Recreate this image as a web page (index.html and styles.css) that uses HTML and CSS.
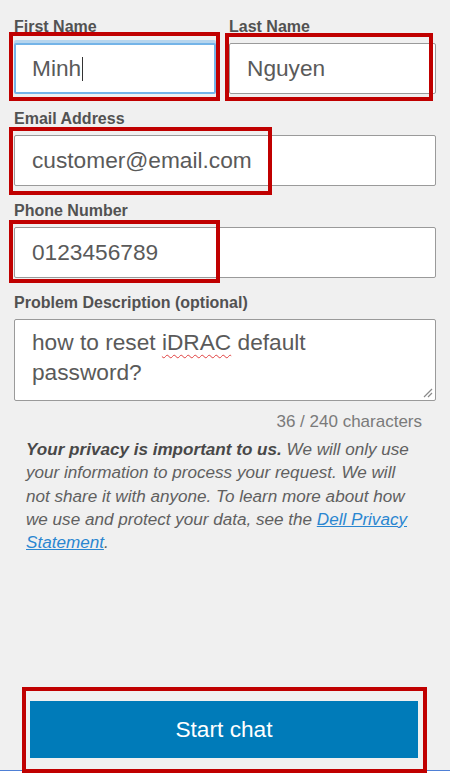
FILE: index.html
```html
<!DOCTYPE html>
<html lang="en">
<head>
<meta charset="utf-8">
<title>Start chat</title>
<link rel="stylesheet" href="styles.css">
</head>
<body>
<div class="page">
  <div class="row">
    <div class="field">
      <label class="label">First Name</label>
      <div class="input focus">Minh<span class="caret"></span></div>
    </div>
    <div class="field">
      <label class="label">Last Name</label>
      <div class="input">Nguyen</div>
    </div>
  </div>
  <div class="field">
    <label class="label">Email Address</label>
    <div class="input">customer@email.com</div>
  </div>
  <div class="field">
    <label class="label">Phone Number</label>
    <div class="input">0123456789</div>
  </div>
  <div class="field last">
    <label class="label">Problem Description (optional)</label>
    <div class="textarea">how to reset <span class="spell">iDRAC</span> default password?<svg class="grip" width="11" height="11" viewBox="0 0 11 11"><path d="M10 2 L2 10 M10 6 L6 10" stroke="#8a8a8a" stroke-width="1.2" fill="none"/></svg></div>
  </div>
  <div class="counter">36 / 240 characters</div>
  <p class="privacy"><b>Your privacy is important to us.</b> We will only use your information to process your request. We will not share it with anyone. To learn more about how we use and protect your data, see the <a href="#" class="link">Dell Privacy Statement</a>.</p>
  <div class="footer">
    <button class="btn" type="button">Start chat</button>
  </div>
  <div class="strip"></div>

  <div class="mark m1"></div>
  <div class="mark m2"></div>
  <div class="mark m3"></div>
  <div class="mark m4"></div>
  <div class="mark m5"></div>
</div>
</body>
</html>
```
FILE: styles.css
```css
html, body {
  margin: 0;
  padding: 0;
  background: #f0f0f0;
}
body {
  font-family: "Liberation Sans", Arial, sans-serif;
}
.page {
  position: relative;
  height: 780px;
  box-sizing: border-box;
  padding: 18px 14px 0 14px;
  display: flex;
  flex-direction: column;
  overflow: hidden;
}
.row {
  display: grid;
  grid-template-columns: 202px 1fr;
  column-gap: 13px;
}
.field {
  margin-bottom: 16px;
  display: flex;
  flex-direction: column;
}
.field.last {
  margin-bottom: 0;
}
.label {
  display: block;
  font-size: 16px;
  line-height: 18px;
  font-weight: bold;
  color: #525252;
  margin-bottom: 7px;
}
.input {
  box-sizing: border-box;
  height: 51px;
  background: #fff;
  border: 1px solid #9a9a9a;
  border-radius: 2px;
  padding: 0 17px;
  display: flex;
  align-items: center;
  font-size: 22.7px;
  color: #5a5a5a;
  white-space: nowrap;
  overflow: hidden;
}
.input.focus {
  border: 2px solid #74b4e8;
  padding-left: 16px;
  box-shadow: 0 -3px 0 #b6d5ee;
}
.caret {
  display: inline-block;
  width: 1px;
  height: 24px;
  background: #333;
  margin-left: 1px;
}
.textarea {
  position: relative;
  box-sizing: border-box;
  height: 82px;
  background: #fff;
  border: 1px solid #9a9a9a;
  border-radius: 2px;
  padding: 7px 20px 0 17px;
  font-size: 22.7px;
  line-height: 30px;
  color: #5a5a5a;
}
.spell {
  text-decoration: underline wavy #e04040;
  text-decoration-thickness: 1px;
  text-underline-offset: 4px;
}
.grip {
  position: absolute;
  right: 2px;
  bottom: 2px;
}
.counter {
  margin-top: 10px;
  text-align: right;
  padding-right: 14px;
  font-size: 17px;
  line-height: 22px;
  color: #7a7a7a;
}
.privacy {
  margin: 5px 0 0 0;
  padding: 0 24px 0 12px;
  font-size: 17.1px;
  line-height: 23.3px;
  font-style: italic;
  color: #606060;
}
.privacy b {
  color: #484848;
}
.link {
  color: #2a86d0;
  text-decoration: underline;
}
.footer {
  margin-top: auto;
  margin-left: -14px;
  margin-right: -14px;
  padding: 0 32px 12px 30px;
  border-bottom: 1px solid #4f80d6;
}
.strip {
  height: 9px;
  margin: 0 -14px;
  background: #ffffff;
  flex: none;
}
.btn {
  display: block;
  width: 100%;
  height: 57px;
  border: 0;
  border-radius: 0;
  background: #007bb9;
  color: #fff;
  font-family: "Liberation Sans", Arial, sans-serif;
  font-size: 22.7px;
  cursor: pointer;
}
.mark {
  position: absolute;
  box-sizing: border-box;
  border: 4px solid #c00000;
}
.m1 { left: 9px; top: 32px; width: 211px; height: 69px; }
.m2 { left: 225px; top: 33px; width: 208px; height: 68px; }
.m3 { left: 9px; top: 127px; width: 263px; height: 68px; }
.m4 { left: 9px; top: 220px; width: 211px; height: 63px; }
.m5 { left: 22px; top: 687px; width: 405px; height: 86px; }
```
